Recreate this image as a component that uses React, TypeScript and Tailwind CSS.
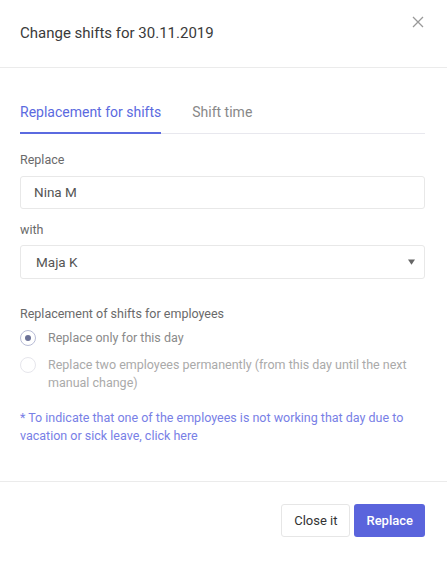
import { useState } from "react";

const FONT = { fontFamily: "Roboto, 'Noto Sans', Arial, sans-serif" };

export default function App() {
  const [tab, setTab] = useState<"replace" | "time">("replace");
  const [mode, setMode] = useState<"day" | "perm">("day");

  return (
    <div className="w-[447px] h-[571px] bg-white flex flex-col relative" style={FONT}>
      <div className="h-[68px] px-5 flex items-center border-b border-[#ebebeb]">
        <h1 className="text-[15px] text-[#3a3a3a]">Change shifts for 30.11.2019</h1>
      </div>
      <button type="button" className="absolute top-[16px] right-[23px] w-[12px] h-[12px] text-[#999]">
        <svg viewBox="0 0 12 12" width="12" height="12" stroke="currentColor" strokeWidth="1.3" fill="none">
          <path d="M1 1L11 11M11 1L1 11" />
        </svg>
      </button>

      <div className="pl-5 pr-[22px] pt-[34px] flex-1">
        <div className="flex border-b border-[#e8e8ee]">
          <button
            type="button"
            onClick={() => setTab("replace")}
            className={`text-[14px] pb-[10px] leading-5 -mb-px border-b-2 ${tab === "replace" ? "text-[#5b6ae0] border-[#5b6ae0]" : "text-[#888] border-transparent"}`}
          >
            Replacement for shifts
          </button>
          <button
            type="button"
            onClick={() => setTab("time")}
            className={`ml-[31px] text-[14px] pb-[10px] leading-5 -mb-px border-b-2 ${tab === "time" ? "text-[#5b6ae0] border-[#5b6ae0]" : "text-[#888] border-transparent"}`}
          >
            Shift time
          </button>
        </div>

        <label className="block mt-[18px] text-[12.5px] leading-4 text-[#6a6a6a]">Replace</label>
        <div className="mt-2 h-[33px] border border-[#e8e8e8] rounded-[3px] px-[13px] flex items-center text-[13.5px] text-[#555]">
          Nina M
        </div>

        <label className="block mt-[13px] text-[12.5px] leading-4 text-[#6a6a6a]">with</label>
        <div className="mt-[7px] h-[34px] border border-[#e8e8e8] rounded-[3px] pl-[15px] pr-[9px] flex items-center justify-between text-[13.5px] text-[#555]">
          <span>Maja K</span>
          <svg viewBox="0 0 8 6" width="7" height="6" fill="#666">
            <path d="M0 0H8L4 6Z" />
          </svg>
        </div>

        <p className="mt-[27px] text-[12.5px] leading-4 text-[#6a6a6a]">Replacement of shifts for employees</p>
        <div className="mt-[7px] flex flex-col gap-[9px]">
          <label className="flex items-start gap-[12px] cursor-pointer" onClick={() => setMode("day")}>
            <span className={`mt-px w-4 h-4 shrink-0 rounded-full border flex items-center justify-center ${mode === "day" ? "border-[#b8bcd6]" : "border-[#e6e6ec]"}`}>
              {mode === "day" && <span className="w-[6px] h-[6px] rounded-full bg-[#6b7197]" />}
            </span>
            <span className={`text-[12.5px] leading-[18px] ${mode === "day" ? "text-[#8a8a8a]" : "text-[#aaa]"}`}>Replace only for this day</span>
          </label>
          <label className="flex items-start gap-[12px] cursor-pointer" onClick={() => setMode("perm")}>
            <span className={`mt-px w-4 h-4 shrink-0 rounded-full border flex items-center justify-center ${mode === "perm" ? "border-[#b8bcd6]" : "border-[#e6e6ec]"}`}>
              {mode === "perm" && <span className="w-[6px] h-[6px] rounded-full bg-[#6b7197]" />}
            </span>
            <span className={`text-[12.5px] leading-[18px] ${mode === "perm" ? "text-[#8a8a8a]" : "text-[#aaa]"}`}>
              Replace two employees permanently (from this day until the next manual change)
            </span>
          </label>
        </div>

        <p className="mt-[17px] text-[12.5px] leading-[18px] text-[#7880e6] pr-3">
          * To indicate that one of the employees is not working that day due to vacation or sick leave, click here
        </p>
      </div>

      <div className="border-t border-[#ebebeb] h-[90px] px-[22px] pt-[22px] flex justify-end items-start gap-1">
        <button type="button" className="h-[33px] px-3 border border-[#e6e6e6] rounded-[3px] text-[13px] text-[#333] bg-white">
          Close it
        </button>
        <button type="button" className="h-[33px] px-3 rounded-[3px] text-[13px] font-medium text-white bg-[#5a64dc]">
          Replace
        </button>
      </div>
    </div>
  );
}
